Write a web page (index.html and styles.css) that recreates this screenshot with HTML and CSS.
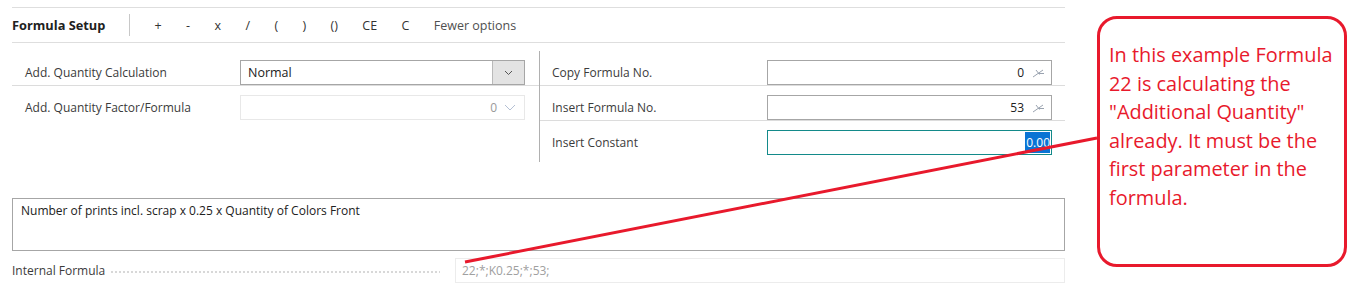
FILE: index.html
```html
<!DOCTYPE html>
<html lang="en">
<head>
    <meta charset="UTF-8">
    <title>Formula Setup</title>
    <link rel="stylesheet" href="styles.css">
</head>
<body>
    <div class="page">
        <div class="card">
            <div class="toolbar">
                <span class="title">Formula Setup</span>
                <span class="sep"></span>
                <button class="op">+</button>
                <button class="op">-</button>
                <button class="op">x</button>
                <button class="op">/</button>
                <button class="op">(</button>
                <button class="op">)</button>
                <button class="op">()</button>
                <button class="op">CE</button>
                <button class="op">C</button>
                <button class="op more">Fewer options</button>
            </div>

            <div class="fields">
                <div class="col">
                    <div class="row">
                        <label>Add. Quantity Calculation</label>
                        <div class="box select">
                            <span class="val left">Normal</span>
                            <span class="drop">
                                <svg width="9" height="6" viewBox="0 0 9 6"><path d="M1 1 L4.5 4.5 L8 1" fill="none" stroke="#555" stroke-width="1"/></svg>
                            </span>
                        </div>
                    </div>
                    <div class="row">
                        <label>Add. Quantity Factor/Formula</label>
                        <div class="box disabled">
                            <span class="val">0</span>
                            <svg class="chev" width="12" height="7" viewBox="0 0 12 7"><path d="M1 1 L6 6 L11 1" fill="none" stroke="#b4c0d4" stroke-width="1"/></svg>
                        </div>
                    </div>
                </div>
                <div class="col right">
                    <div class="row">
                        <label>Copy Formula No.</label>
                        <div class="box">
                            <span class="val">0</span>
                            <svg class="lookup" width="13" height="10" viewBox="0 0 13 10"><path d="M1 9 L11 2 M4 2 L7.5 6.5 M6 5.5 L12 5.5" fill="none" stroke="#9aa3b0" stroke-width="1"/></svg>
                        </div>
                    </div>
                    <div class="row">
                        <label>Insert Formula No.</label>
                        <div class="box">
                            <span class="val">53</span>
                            <svg class="lookup" width="13" height="10" viewBox="0 0 13 10"><path d="M1 9 L11 2 M4 2 L7.5 6.5 M6 5.5 L12 5.5" fill="none" stroke="#9aa3b0" stroke-width="1"/></svg>
                        </div>
                    </div>
                    <div class="row">
                        <label>Insert Constant</label>
                        <div class="box focus">
                            <span class="val"><span class="sel">0.00</span></span>
                        </div>
                    </div>
                </div>
            </div>

            <div class="desc">Number of prints incl. scrap x 0.25 x Quantity of Colors Front</div>

            <div class="formula">
                <label>Internal Formula</label>
                <span class="leader"></span>
                <div class="box readonly">22;*;K0.25;*;53;</div>
            </div>
        </div>

        <div class="callout">
            In this example Formula 22 is calculating the "Additional Quantity" already. It must be the first parameter in the formula.
        </div>
    </div>

    <svg class="pointer" width="1370" height="292" viewBox="0 0 1370 292">
        <line x1="465" y1="262" x2="1097" y2="138" stroke="#e8192c" stroke-width="3"/>
    </svg>
</body>
</html>
```

FILE: styles.css
```css
body {
    margin: 0;
    font-family: "Open Sans", "Noto Sans", sans-serif;
    font-size: 12px;
    color: #333;
    background-color: #fff;
}

.page {
    display: flex;
    align-items: flex-start;
    gap: 32px;
    padding-left: 12px;
}

.card {
    width: 1053px;
    padding-top: 7px;
}

/* toolbar */
.toolbar {
    display: flex;
    align-items: center;
    height: 34px;
    border-top: 1px solid #dedede;
    border-bottom: 1px solid #dedede;
}

.title {
    font-weight: 700;
    font-size: 12.8px;
    color: #212121;
}

.sep {
    width: 1px;
    height: 22px;
    background-color: #c8c8c8;
    margin: 0 12px 0 24px;
}

.op {
    font-family: inherit;
    font-size: 12.5px;
    color: #333;
    background: none;
    border: none;
    padding: 0 12.2px;
    cursor: pointer;
}

.op.more {
    color: #505050;
}

/* fields */
.fields {
    display: grid;
    grid-template-columns: 527px 1fr;
    margin-top: 8px;
}

.col {
    padding-bottom: 7px;
}

.col.right {
    border-left: 1px solid #b0b0b0;
}

.row {
    display: flex;
    align-items: center;
    padding: 9px 14px 0 13px;
    border-bottom: 1px solid #dcdcdc;
}

.col.right .row {
    padding-left: 12px;
    padding-right: 12px;
}

.row:last-child {
    border-bottom: none;
}

.row label {
    width: 215px;
    flex-shrink: 0;
    color: #3b3b3b;
}

.box {
    position: relative;
    display: flex;
    align-items: center;
    justify-content: flex-end;
    width: 285px;
    height: 25px;
    box-sizing: border-box;
    border: 1px solid #a6a6a6;
    background-color: #fff;
    padding: 0 8px;
    color: #212121;
}

.box .val {
    flex: 1;
    text-align: right;
}

.box .val.left {
    text-align: left;
}

.box.select {
    padding: 0 0 0 7px;
    font-size: 12.5px;
}

.drop {
    display: flex;
    align-items: center;
    justify-content: center;
    width: 31px;
    height: 100%;
    background-color: #e3e3e3;
    border-left: 1px solid #b9b9b9;
}

.box.disabled {
    border-color: #e8e8e8;
    color: #9a9a9a;
}

.chev {
    margin-left: 7px;
    margin-right: 0;
}

.lookup {
    margin-left: 8px;
    margin-right: -2px;
}

.box.focus {
    border-color: #138a8a;
    padding-right: 1px;
}

.sel {
    background-color: #0a74d4;
    color: #fff;
    padding: 2px 0 2px 1px;
}

/* description */
.desc {
    margin-top: 36px;
    height: 53px;
    box-sizing: border-box;
    border: 1px solid #a6a6a6;
    padding: 3px 8px;
    color: #212121;
}

/* internal formula */
.formula {
    display: flex;
    align-items: center;
    margin-top: 7px;
}

.formula label {
    color: #3b3b3b;
}

.leader {
    flex: 1;
    height: 2px;
    margin: 3px 15px 0 6px;
    background-image: linear-gradient(to right, #d8d8d8 2px, transparent 2px);
    background-size: 4px 2px;
    background-repeat: repeat-x;
}

.box.readonly {
    width: 610px;
    justify-content: flex-start;
    border-color: #ececec;
    color: #a0a0a0;
    padding-left: 6px;
}

/* annotation */
.callout {
    width: 250px;
    height: 251px;
    margin-top: 16px;
    box-sizing: border-box;
    border: 3px solid #e8192c;
    border-radius: 20px;
    padding: 22px 7px 0 9px;
    color: #e8192c;
    font-size: 19.9px;
    line-height: 28.5px;
}

.pointer {
    position: absolute;
    top: 0;
    left: 0;
    pointer-events: none;
}
```
